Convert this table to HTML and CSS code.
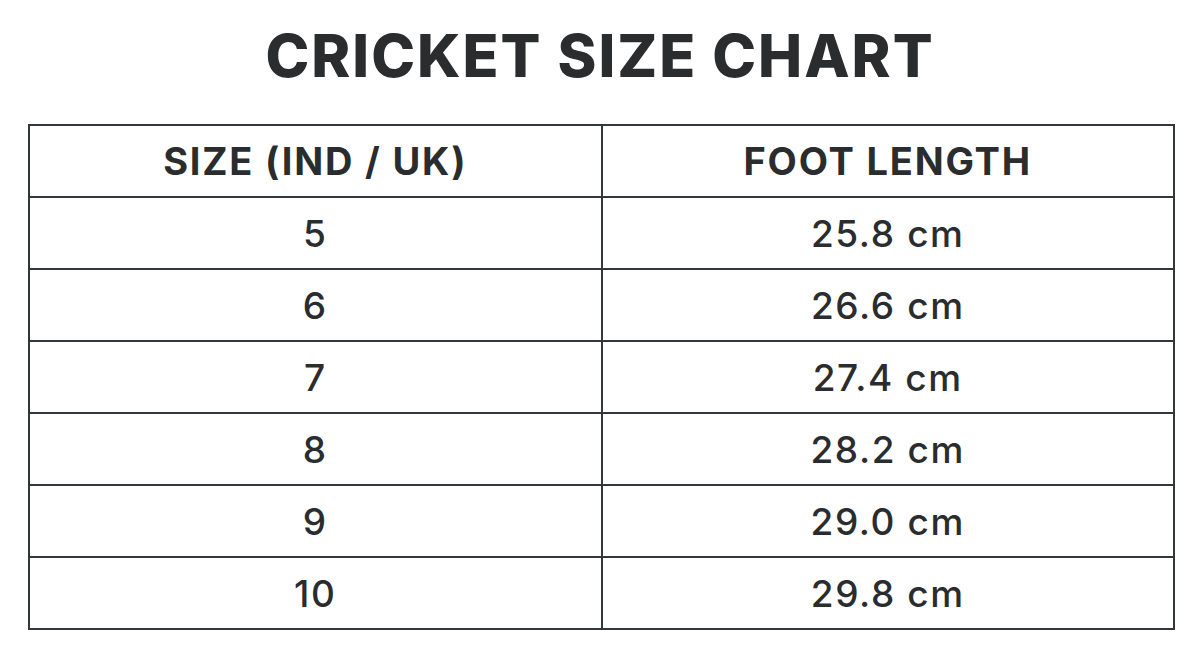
FILE: index.html
```html
<!DOCTYPE html>
<html>
<head>
<meta charset="utf-8">
<link rel="stylesheet" href="styles.css">
</head>
<body>
<div class="page">
  <h1 class="title">CRICKET SIZE CHART</h1>
  <table class="chart">
    <thead>
      <tr><th>SIZE (IND / UK)</th><th>FOOT LENGTH</th></tr>
    </thead>
    <tbody>
      <tr><td>5</td><td>25.8 cm</td></tr>
      <tr><td>6</td><td>26.6 cm</td></tr>
      <tr><td>7</td><td>27.4 cm</td></tr>
      <tr><td>8</td><td>28.2 cm</td></tr>
      <tr><td>9</td><td>29.0 cm</td></tr>
      <tr><td>10</td><td>29.8 cm</td></tr>
    </tbody>
  </table>
</div>
</body>
</html>
```

FILE: styles.css
```css
html, body {
  margin: 0;
  padding: 0;
  background: #ffffff;
}
.page {
  width: 1200px;
  height: 655px;
  display: flex;
  flex-direction: column;
  font-family: Inter, "Open Sans", "DejaVu Sans", sans-serif;
  color: #2a2c2e;
}
.title {
  margin: 0;
  height: 124px;
  display: flex;
  align-items: center;
  justify-content: center;
  font-size: 59px;
  font-weight: 800;
  letter-spacing: 2px;
  padding-bottom: 14px;
  box-sizing: border-box;
}
.chart {
  margin: 0 25px 0 28px;
  width: 1147px;
  border-collapse: collapse;
  table-layout: fixed;
  border: 2px solid #2f3234;
}
.chart th, .chart td {
  border: 2px solid #34373a;
  height: 70px;
  padding: 0;
  text-align: center;
  vertical-align: middle;
}
.chart th {
  font-size: 38px;
  font-weight: 700;
  letter-spacing: 1.8px;
}
.chart td {
  font-size: 37px;
  font-weight: 500;
  letter-spacing: 1.6px;
}
```
